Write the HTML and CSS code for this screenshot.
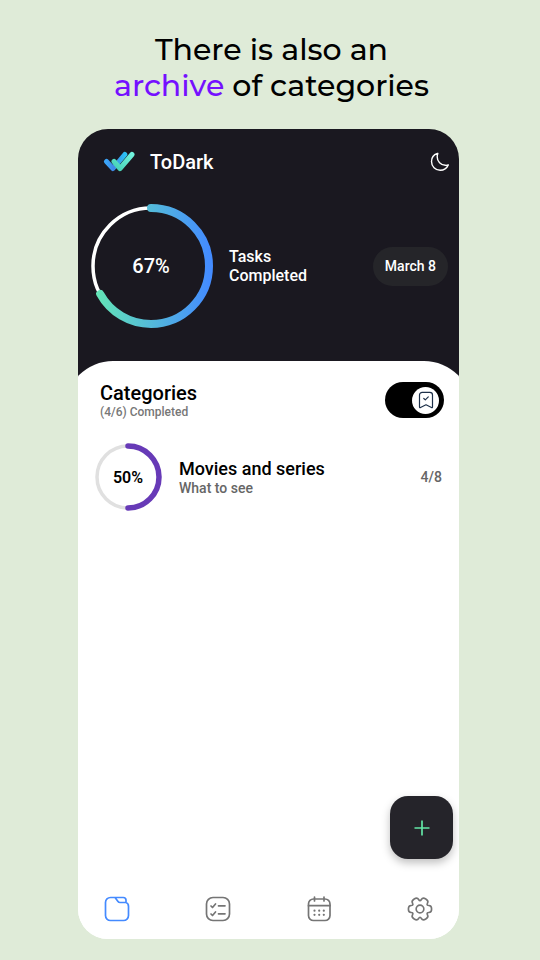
FILE: index.html
```html
<!DOCTYPE html>
<html lang="en">
<head>
<meta charset="utf-8">
<meta name="viewport" content="width=device-width, initial-scale=1">
<title>ToDark</title>
<link rel="stylesheet" href="styles.css">
</head>
<body>
<h1 class="headline">There is also an<br><span class="accent">archive</span> of categories</h1>
<main class="phone">
  <header class="appbar">
    <svg class="logo" viewBox="0 0 32 22" aria-hidden="true">
      <defs>
        <linearGradient id="blue" x1="0" y1="0" x2="1" y2="0"><stop offset="0" stop-color="#3ba4f8"/><stop offset=".4" stop-color="#3f86e6"/><stop offset="1" stop-color="#2bc0f2"/></linearGradient>
        <linearGradient id="mint" x1="0" y1="1" x2="1" y2="0"><stop offset="0" stop-color="#45d0b4"/><stop offset="1" stop-color="#70f2dc"/></linearGradient>
      </defs>
      <path d="M3.500 10.500 10 17.500 21.800 3.500" fill="none" stroke="url(#blue)" stroke-width="5" stroke-linecap="round" stroke-linejoin="round"/>
      <path d="M11 10.500 17 17.500 29 3.500" fill="none" stroke="url(#mint)" stroke-width="5" stroke-linecap="round" stroke-linejoin="round"/>
    </svg>
    <span class="brand">ToDark</span>
    <button class="icon-button moon" aria-label="Switch theme">
      <svg viewBox="0 0 20 20"><path d="M7.400 1.500C4 2.500 1.500 5.800 1.500 9.600c0 4.900 3.900 8.700 8.600 8.700 3.700 0 6.800-2.200 8.200-5.400-1 .4-2 .5-3 .4-4.500-.2-8.100-3.900-8.100-8.300 0-1.300.2-2.400.6-3.500z"/></svg>
    </button>
  </header>

  <section class="summary">
    <div class="ring ring-large">
      <svg viewBox="-62 -62 124 124" aria-hidden="true">
        <defs><linearGradient id="sweep" gradientUnits="userSpaceOnUse" x1="0" y1="-58" x2="0" y2="58"><stop offset="0" stop-color="#64e8b4"/><stop offset="1" stop-color="#448cff"/></linearGradient></defs>
        <circle r="58" fill="none" stroke="#fff" stroke-width="3.500"/>
        <circle r="58" fill="none" stroke="url(#sweep)" stroke-width="8" stroke-linecap="round" pathLength="100" stroke-dasharray="67 100" transform="rotate(-90)"/>
      </svg>
      <span>67%</span>
    </div>
    <p class="summary-text">Tasks<br>Completed</p>
    <button class="date">March 8</button>
  </section>

  <section class="sheet">
    <div class="sheet-head">
      <div>
        <h2>Categories</h2>
        <p class="count">(4/6) Completed</p>
      </div>
      <label class="toggle">
        <input type="checkbox" checked aria-label="Show archive">
        <span class="knob"><svg viewBox="0 0 16 18" aria-hidden="true"><path d="M1.500 16V4a2.700 2.700 0 0 1 2.700-2.700h7.600A2.700 2.700 0 0 1 14.500 4v12c0 .6-.5.800-1 .5L8 13.800l-5.500 2.700c-.5.300-1 .1-1-.5zM5.800 7.500l1.500 1.400 3-3"/></svg></span>
      </label>
    </div>

    <article class="category">
      <div class="ring ring-small">
        <svg viewBox="-34 -34 68 68" aria-hidden="true">
          <circle r="31" fill="none" stroke="#e0e0e0" stroke-width="3.500"/>
          <circle r="31" fill="none" stroke="#673ab7" stroke-width="5.500" stroke-linecap="round" pathLength="100" stroke-dasharray="50 100" transform="rotate(-90)"/>
        </svg>
        <span>50%</span>
      </div>
      <div class="category-text">
        <h3>Movies and series</h3>
        <p>What to see</p>
      </div>
      <span class="ratio">4/8</span>
    </article>
  </section>

  <button class="fab" aria-label="Add category">
    <svg viewBox="0 0 16 16"><path d="M8 .5v15M.5 8h15"/></svg>
  </button>

  <nav class="tabs">
    <a class="active" href="#categories" aria-label="Categories"><svg viewBox="0 0 26 26"><path d="M11 1.500H6.500a5 5 0 0 0-5 5v13a5 5 0 0 0 5 5h13a5 5 0 0 0 5-5v-9c0-2-.8-3.500-2.500-4V4.200A2.700 2.700 0 0 0 19.300 1.500H11l3 4c.5.700 1 1 2 1h6"/></svg></a>
    <a href="#tasks" aria-label="Tasks"><svg viewBox="0 0 26 26"><rect x="1.500" y="1.500" width="23" height="23" rx="6.500"/><path d="M6 10l1.500 1.500L10.500 8M6 18l1.500 1.500L10.500 16M13.500 9.800h6.500M13.500 17.800h6.500"/></svg></a>
    <a href="#calendar" aria-label="Calendar"><svg viewBox="0 0 26 26"><rect x="2.500" y="3" width="21.500" height="21.500" rx="5"/><path d="M2.500 9.700H24M8.500 1v4M18 1v4"/><path class="dots" d="M8.500 14.700h.01M13.200 14.700h.01M17.800 14.700h.01M8.500 18.800h.01M13.200 18.800h.01M17.800 18.800h.01"/></svg></a>
    <a href="#settings" aria-label="Settings"><svg viewBox="-13.500 -13.500 27 27"><circle r="4"/><path d="M12.050 0Q12.050 3.680 9.230 3.690 6.410 3.700 7.810 6.150 9.210 8.590 6.020 10.440 2.830 12.280 1.420 9.840 0 7.400-1.420 9.840-2.830 12.280-6.020 10.440-9.210 8.590-7.810 6.150-6.410 3.700-9.230 3.690-12.050 3.680-12.050 0-12.050-3.680-9.230-3.690-6.410-3.700-7.810-6.150-9.210-8.590-6.020-10.440-2.830-12.280-1.420-9.840 0-7.400 1.420-9.840 2.830-12.280 6.020-10.440 9.210-8.590 7.810-6.150 6.410-3.700 9.230-3.690 12.050-3.680 12.050 0z"/></svg></a>
  </nav>
</main>
</body>
</html>
```
FILE: styles.css
```css
* {
  box-sizing: border-box;
}

body {
  margin: 0;
  min-height: 100vh;
  display: flex;
  flex-direction: column;
  padding: 32px 81px 21px 78px;
  background: #dfebd8;
  font-family: Roboto, "Liberation Sans", sans-serif;
  font-weight: 500;
  color: #000;
}

h1, h2, h3, p {
  margin: 0;
}

svg {
  display: block;
}

button {
  border: 0;
  padding: 0;
  font: inherit;
  color: inherit;
  cursor: pointer;
}

.headline {
  margin: 0 -40px 25px -34px;
  font: 500 30px/36px Montserrat, Inter, sans-serif;
  text-align: center;
}

.accent {
  color: #7510ff;
}

.phone {
  position: relative;
  flex: 1;
  display: flex;
  flex-direction: column;
  overflow: hidden;
  border-radius: 30px;
  background: linear-gradient(#1a1820 50%, #fff 50%);
}

.appbar {
  display: flex;
  align-items: center;
  height: 66px;
  padding: 0 9px 0 25px;
  color: #fff;
}

.logo {
  width: 32px;
  height: 22px;
}

.brand {
  margin-left: 15px;
  font-size: 20px;
}

.icon-button {
  margin-left: auto;
  background: none;
}

.moon svg {
  width: 20px;
  height: 20px;
  fill: none;
  stroke: #fff;
  stroke-width: 1.4;
  stroke-linejoin: round;
}

.summary {
  display: flex;
  align-items: center;
  padding: 9px 11px 33px;
  color: #fff;
}

.ring {
  display: grid;
  place-items: center;
}

.ring > * {
  grid-area: 1 / 1;
}

.ring-large {
  width: 124px;
  height: 124px;
  font-size: 20px;
}

.summary-text {
  margin-left: 16px;
  font-size: 16px;
  line-height: 19px;
}

.date {
  margin-left: auto;
  padding: 0 12px;
  height: 39px;
  border-radius: 20px;
  background: #252529;
  font-size: 14px;
}

.sheet {
  flex: 1;
  margin: 0 -13px;
  padding: 20px 28px 0 35px;
  border-radius: 48px 48px 0 0;
  background: #fff;
}

.sheet-head {
  display: flex;
  align-items: center;
  justify-content: space-between;
}

h2 {
  font-size: 20px;
  line-height: 24px;
  font-weight: 500;
}

.count {
  font-size: 12px;
  line-height: 14px;
  color: #777;
}

.toggle {
  display: grid;
  align-items: center;
  width: 59px;
  height: 36px;
  border-radius: 18px;
  background: #000;
}

.toggle > * {
  grid-area: 1 / 1;
}

.toggle input {
  appearance: none;
  margin: 0;
  width: 100%;
  height: 100%;
}

.knob {
  display: grid;
  place-items: center;
  width: 27px;
  height: 27px;
  margin-left: 4px;
  border-radius: 50%;
  background: #fff;
  pointer-events: none;
}

.toggle input:checked + .knob {
  margin-left: 27px;
}

.knob svg {
  width: 16px;
  height: 18px;
  fill: none;
  stroke: #1d3049;
  stroke-width: 1.2;
  stroke-linecap: round;
  stroke-linejoin: round;
}

.category {
  display: flex;
  align-items: center;
  margin-top: 24px;
  padding-right: 2px;
}

.ring-small {
  width: 68px;
  height: 68px;
  margin-left: -6px;
  font-size: 16px;
  font-weight: 600;
}

.category-text {
  margin-left: 17px;
}

h3 {
  font-size: 18px;
  line-height: 22px;
  font-weight: 500;
}

.category-text p {
  font-size: 14px;
  line-height: 16px;
  color: #666;
}

.ratio {
  margin-left: auto;
  font-size: 14px;
  color: #666;
}

.fab {
  position: absolute;
  right: 6px;
  bottom: 80px;
  display: grid;
  place-items: center;
  width: 63px;
  height: 63px;
  border-radius: 18px;
  background: #25242a;
  box-shadow: 0 4px 8px rgba(0, 0, 0, 0.25);
}

.fab svg {
  width: 16px;
  height: 16px;
  fill: none;
  stroke: #63e6a6;
  stroke-width: 1.7;
}

.tabs {
  display: flex;
  align-items: center;
  justify-content: space-between;
  height: 60px;
  padding: 0 26px;
  background: #fff;
}

.tabs a {
  color: #757575;
}

.tabs .active {
  color: #448aff;
}

.tabs svg {
  width: 26px;
  height: 26px;
  fill: none;
  stroke: currentColor;
  stroke-width: 1.7;
  stroke-linecap: round;
  stroke-linejoin: round;
}

.tabs .dots {
  stroke-width: 2.2;
}
```
